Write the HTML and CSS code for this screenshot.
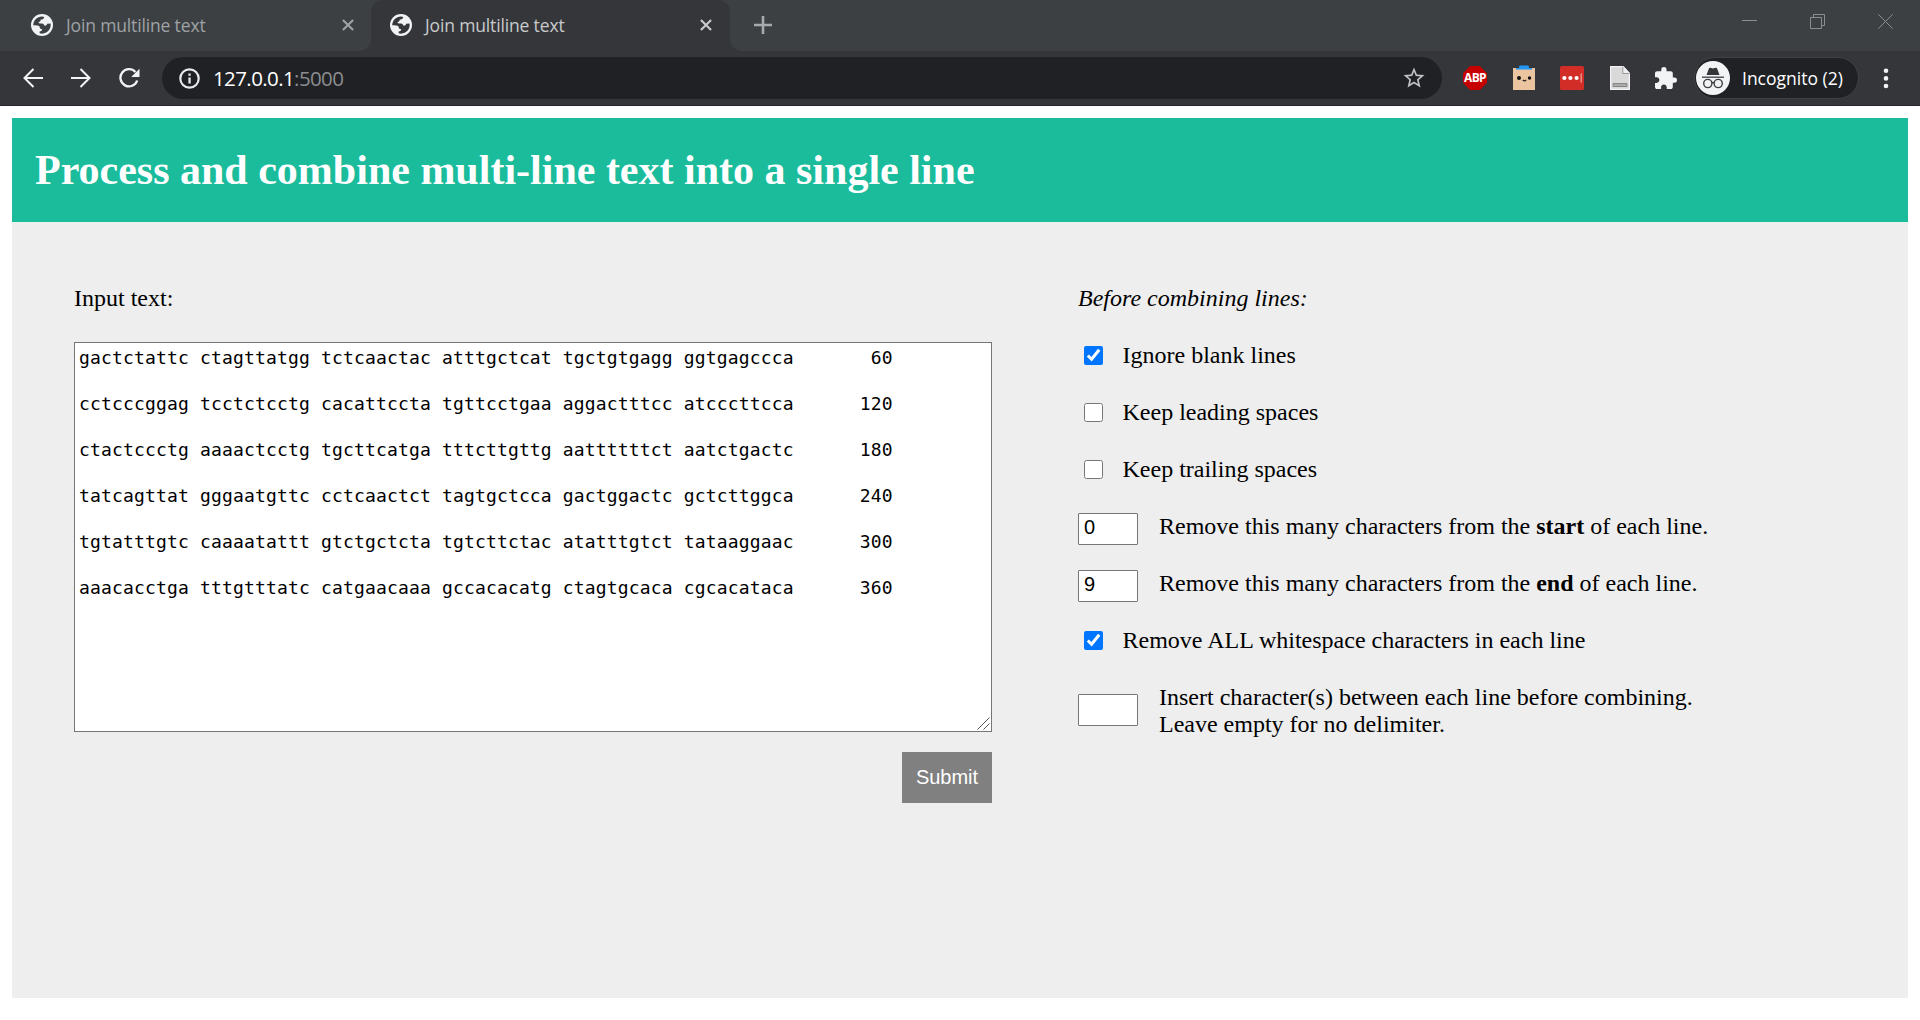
FILE: index.html
```html
<!DOCTYPE html>
<html lang="en">
<head>
<meta charset="utf-8">
<title>Join multiline text</title>
<link rel="stylesheet" href="styles.css">
</head>
<body>
<svg width="0" height="0" class="defs" aria-hidden="true">
  <symbol id="globe" viewBox="0 0 22 22">
    <circle cx="11" cy="11" r="11" fill="#f1f3f4"/>
    <path class="land" d="M2.2 11.2C2.4 6.2 6.2 2.6 11 2.5L13.3 3C12.8 5.2 11.6 5.4 9.8 5.5C9.7 7.2 9 7.8 7.6 8C7.4 9.3 8 9.4 11 9.5C12.6 9.7 13 10.3 13.2 11.6C15 11.8 15.8 11.2 16.2 9.8L19.6 9.6C20.4 14.8 16.5 19.6 11 19.7L8.6 19.2V17.6C10.2 17.3 11.2 16.5 11.2 15.2C9.3 15.1 8.6 14.3 8.5 12.3C7.5 11.2 5 11.5 2.2 11.2Z"/>
  </symbol>
  <symbol id="cross" viewBox="0 0 12 12">
    <path d="M.9.9 11.1 11.1M11.1.9.9 11.1" stroke="currentColor" stroke-width="2.1" fill="none"/>
  </symbol>
</svg>

<header class="browser">
  <div class="tabs">
    <div class="tab">
      <svg class="favicon"><use href="#globe"/></svg>
      <span class="tab-title">Join multiline text</span>
      <svg class="tab-close"><use href="#cross"/></svg>
    </div>
    <div class="tab active">
      <svg class="favicon"><use href="#globe"/></svg>
      <span class="tab-title">Join multiline text</span>
      <svg class="tab-close"><use href="#cross"/></svg>
    </div>
    <div class="tab-rest">
      <svg class="new-tab" viewBox="0 0 18 18"><path d="M9 0V18M0 9H18" stroke="#a7aaad" stroke-width="2.6"/></svg>
      <div class="window-buttons">
        <svg width="15" height="15" viewBox="0 0 15 15"><path d="M0 6.500H15"/></svg>
        <svg width="15" height="15" viewBox="0 0 15 15"><path d="M.5 3.500H11.500V14.500H.5ZM3.500 3.500V.5H14.500V11.500H11.500"/></svg>
        <svg width="15" height="15" viewBox="0 0 15 15"><path d="M.3.3 14.700 14.700M14.700.3.3 14.700"/></svg>
      </div>
    </div>
  </div>
  <div class="toolbar">
    <div class="nav">
      <svg width="20" height="20" viewBox="0 0 20 20"><path d="M20 10H2M10.500 1 1.500 10l9 9" fill="none" stroke="#f1f3f4" stroke-width="2"/></svg>
      <svg width="20" height="20" viewBox="0 0 20 20"><path d="M0 10H18M9.500 1l9 9-9 9" fill="none" stroke="#f1f3f4" stroke-width="2"/></svg>
      <svg width="21" height="20" viewBox="0 0 21 20"><path d="M18.200 12.500A8.600 8.600 0 1 1 16.400 4" fill="none" stroke="#f1f3f4" stroke-width="2.300"/><path d="M20.500.7V9H12.200Z" fill="#f1f3f4"/></svg>
    </div>
    <div class="omnibox">
      <svg width="21" height="21" viewBox="0 0 21 21"><circle cx="10.500" cy="10.500" r="9.200" fill="none" stroke="#e8eaed" stroke-width="2.200"/><path d="M9.400 9.500h2.300v6H9.400zM9.400 5.500h2.300v2.300H9.400z" fill="#e8eaed"/></svg>
      <span class="url">127.0.0.1<span class="port">:5000</span></span>
      <svg class="star" width="22" height="22" viewBox="1.500 1.500 21 21"><path fill="#bfc1c4" d="M22 9.240l-7.190-.62L12 2 9.190 8.630 2 9.240l5.460 4.730L5.820 21 12 17.270 18.180 21l-1.630-7.030L22 9.240zM12 15.400l-3.760 2.270 1-4.280-3.320-2.880 4.380-.38L12 6.100l1.710 4.040 4.380.38-3.320 2.880 1 4.280L12 15.400z"/></svg>
    </div>
    <div class="extensions">
      <span class="abp">ABP</span>
      <svg width="22" height="25" viewBox="0 0 22 25"><path d="M0 3H22V25H0Z" fill="#ebc4a0"/><path d="M3 3H6V1.500L7 .5H15L16 1.500V3H19V4.500H3Z" fill="#2196f3"/><circle cx="6" cy="13" r="2" fill="#111"/><circle cx="16.500" cy="13" r="1.700" fill="#111"/><path d="M9.800 15q1.700 1.700 3.400 0" stroke="#222" fill="none" stroke-width="1.200"/></svg>
      <svg width="24" height="24" viewBox="0 0 24 24"><rect width="24" height="24" rx="1.800" fill="#d32d27"/><g fill="#fff"><circle cx="4.400" cy="12" r="2.100"/><circle cx="10.400" cy="12" r="2.100"/><circle cx="16.600" cy="12" r="2.100"/><path d="M20.700 7.500h.9v9h-.9z" opacity=".8"/></g></svg>
      <svg width="20" height="24" viewBox="0 0 20 24"><path d="M.5.5H13L19.500 7.500V23.500H.5Z" fill="#d9d9d9" stroke="#f3f3f3" stroke-width="1.500"/><path d="M12.800.5V7.500H19.500" fill="#eee" stroke="#888" stroke-width=".8"/><path d="M3 17.500H17V20.500H3Z" fill="#aaa" stroke="#777" stroke-width=".8"/></svg>
      <svg width="22" height="22" viewBox="2 1 21 21"><path fill="#f1f3f4" d="M20.500 11H19V7c0-1.100-.9-2-2-2h-4V3.500a2.500 2.500 0 0 0-5 0V5H4c-1.100 0-1.990.9-1.990 2v3.800H3.500c1.490 0 2.700 1.210 2.700 2.700s-1.210 2.700-2.700 2.700H2V20c0 1.100.9 2 2 2h3.800v-1.500c0-1.490 1.210-2.700 2.700-2.700s2.700 1.210 2.700 2.700V22H17c1.100 0 2-.9 2-2v-4h1.500a2.500 2.500 0 0 0 0-5z"/></svg>
    </div>
    <div class="profile">
      <svg width="34" height="34" viewBox="0 0 34 34"><circle cx="17" cy="17" r="17" fill="#f1f3f4"/><path d="M6 16.200H28" stroke="#3c4043" stroke-width="1.300"/><path d="M10.500 14 13 7.200Q13.500 6.500 14.300 6.800L17 7.500 19.700 6.800Q20.500 6.500 21 7.200L23.500 14Z" fill="#35363a"/><g fill="none" stroke="#3c4043" stroke-width="1.400"><circle cx="11.800" cy="22.500" r="4.100"/><circle cx="22.200" cy="22.500" r="4.100"/><path d="M15.700 22q1.300-.9 2.600 0"/></g></svg>
      <span>Incognito (2)</span>
    </div>
    <svg class="menu" width="6" height="21" viewBox="0 0 6 21"><g fill="#f1f3f4"><circle cx="3" cy="2.700" r="2.300"/><circle cx="3" cy="10.400" r="2.300"/><circle cx="3" cy="18" r="2.300"/></g></svg>
  </div>
</header>

<main class="page">
  <div class="banner"><h1>Process and combine multi-line text into a single line</h1></div>
  <form class="form">
    <div class="input-side">
      <label for="text">Input text:</label>
      <div class="text-box">
        <textarea id="text" spellcheck="false">gactctattc ctagttatgg tctcaactac atttgctcat tgctgtgagg ggtgagccca       60

cctcccggag tcctctcctg cacattccta tgttcctgaa aggactttcc atcccttcca      120

ctactccctg aaaactcctg tgcttcatga tttcttgttg aattttttct aatctgactc      180

tatcagttat gggaatgttc cctcaactct tagtgctcca gactggactc gctcttggca      240

tgtatttgtc caaaatattt gtctgctcta tgtcttctac atatttgtct tataaggaac      300

aaacacctga tttgtttatc catgaacaaa gccacacatg ctagtgcaca cgcacataca      360</textarea>
        <svg class="grip" viewBox="0 0 13 13"><path d="M.5 12.500 12.500.5M6.500 12.500l6-6"/></svg>
      </div>
      <button type="button">Submit</button>
    </div>
    <div class="options">
      <div class="row"><em>Before combining lines:</em></div>
      <label class="row"><input type="checkbox" checked><span>Ignore blank lines</span></label>
      <label class="row"><input type="checkbox"><span>Keep leading spaces</span></label>
      <label class="row"><input type="checkbox"><span>Keep trailing spaces</span></label>
      <label class="row"><input type="text" value="0"><span>Remove this many characters from the <b>start</b> of each line.</span></label>
      <label class="row"><input type="text" value="9"><span>Remove this many characters from the <b>end</b> of each line.</span></label>
      <label class="row"><input type="checkbox" checked><span>Remove ALL whitespace characters in each line</span></label>
      <label class="row delimiter"><input type="text"><span>Insert character(s) between each line before combining.<br>Leave empty for no delimiter.</span></label>
    </div>
  </form>
</main>
</body>
</html>
```

FILE: styles.css
```css
* { box-sizing: border-box; }
body {
  margin: 0;
  height: 1020px;
  overflow: hidden;
  background: #fff;
  color: #000;
  font: 24px/27px "Liberation Serif", "Times New Roman", serif;
}
.defs { position: absolute; }
svg { display: block; flex: none; }

/* Browser chrome */
.browser { font-family: "Open Sans", "Noto Sans", sans-serif; height: 106px; background: #35363a; border-bottom: 1px solid #252629; }
.tabs { display: flex; height: 51px; background: linear-gradient(#3c4043 50%, #35363a 50%); }
.tab { --tab: #3c4043; display: flex; align-items: center; width: 371px; height: 51px; padding: 0 17px 1px 31px; background: var(--tab); color: #9fa2a5; border-bottom-right-radius: 12px; }
.tab.active { --tab: #35363a; width: 359px; padding: 0 18px 1px 19px; color: #c8cacc; border-radius: 12px 12px 0 0; }
.land { fill: var(--tab); }
.tab-rest { display: flex; flex: 1; background: #3c4043; border-bottom-left-radius: 12px; }
.favicon { width: 22px; height: 22px; }
.tab-title { flex: 1; margin-left: 13px; font-size: 17.500px; line-height: 24px; white-space: nowrap; letter-spacing: -.15px; }
.tab-close { width: 12px; height: 12px; }
.new-tab { width: 18px; height: 18px; margin: 16px 0 0 24px; }
.window-buttons { display: flex; gap: 53px; margin: 14px 27px 0 auto; }
.window-buttons path { fill: none; stroke: #8b8e90; stroke-width: 1; }
.toolbar { display: flex; align-items: center; height: 54px; }
.nav { display: flex; gap: 28px; margin: 0 22px 0 23px; }
.nav svg { margin-top: -1px; }
.omnibox { display: flex; align-items: center; width: 1280px; height: 42px; padding: 0 17px; border-radius: 21px; background: #202124; }
.url { flex: 1; padding-left: 13px; color: #fff; font-size: 20.500px; letter-spacing: -.6px; }
.port { color: #8b8d90; }
.extensions { display: flex; align-items: center; gap: 25.500px; margin-left: 21px; }
.extensions svg { margin-top: -1px; }
.abp { width: 24px; height: 24px; background: #c70000; color: #fff; font: bold 12px/24px "Open Sans", sans-serif; text-align: center; letter-spacing: -.6px; clip-path: polygon(30% 0, 70% 0, 100% 30%, 100% 70%, 70% 100%, 30% 100%, 0 70%, 0 30%); }
.profile { display: flex; align-items: center; gap: 12px; width: 165px; height: 42px; margin-left: 17px; padding-left: 1px; border: 1px solid #3f4145; border-radius: 21px; background: #202124; color: #fff; font-size: 17.500px; letter-spacing: 0; white-space: nowrap; }
.menu { margin-left: 24px; }

/* Application */
.page { height: 880px; margin: 12px 12px 0; background: #eee; }
.banner { height: 104px; padding: 28px 23px; background: #1abc9c; }
.banner h1 { margin: 0; color: #fff; font-size: 42px; line-height: 48px; }
.form { display: flex; padding: 63px 62px 0; }
.input-side { display: flex; flex-direction: column; width: 918px; }
.text-box { position: relative; display: flex; margin: 30px 0 20px; }
.text-box textarea {
  width: 918px;
  height: 390px;
  padding: 3px 4px;
  border: 1px solid #767676;
  border-radius: 0;
  font: 18px/23px "DejaVu Sans Mono", monospace;
  letter-spacing: .16px;
  resize: none;
}
.grip { position: absolute; right: 2px; bottom: 2px; width: 13px; height: 13px; fill: none; stroke: #555; stroke-width: 1; }
.input-side button { align-self: flex-end; width: 90px; height: 51px; padding: 0; border: 0; background: #808080; color: #fff; font: 20px "Liberation Sans", Arial, sans-serif; }
.options { display: flex; flex-direction: column; gap: 30px; margin-left: 86px; }
.row { display: flex; align-items: flex-start; height: 27px; white-space: nowrap; }
.row input[type="checkbox"] { width: 19px; height: 19px; margin: 4px 19.500px 0 6px; }
.row input[type="text"] { width: 60px; height: 32px; margin: 0 21px 0 0; padding: 0 5px 3px; border: 1px solid #767676; border-radius: 1px; font: 20px "Liberation Sans", Arial, sans-serif; }
.row.delimiter { height: 54px; }
.row.delimiter input[type="text"] { margin-top: 10px; }
```
